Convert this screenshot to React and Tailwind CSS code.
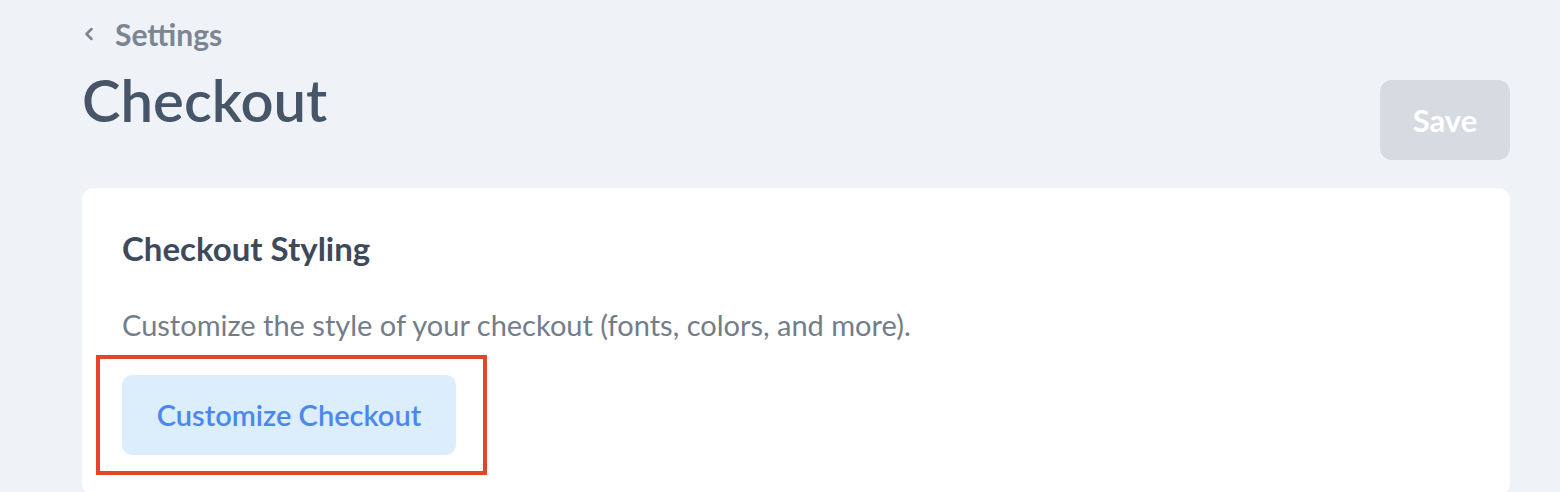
import React from 'react';
import { ChevronLeft } from 'lucide-react';

export default function App() {
    return (
        <div className="min-h-[492px] bg-[#eff3f7] pl-[82px] pr-[50px] pt-[18px] overflow-hidden" style={{ fontFamily: 'Lato, "Open Sans", sans-serif' }}>
            <div className="flex items-start justify-between">
                <div>
                    <a className="flex items-center gap-[16px] text-[#7b8594] text-[30px] font-bold leading-[32px]">
                        <ChevronLeft size={20} strokeWidth={3} className="-ml-[3px]" /> Settings
                    </a>
                    <h1 className="mt-[17px] text-[58px] leading-[66px] font-semibold text-[#475569]">Checkout</h1>
                </div>
                <button className="mt-[62px] w-[130px] h-[80px] rounded-xl bg-[#d6dbe2] text-white text-[31px] font-bold">
                    Save
                </button>
            </div>

            <div className="mt-[28px] bg-white rounded-xl px-[40px] pt-[40px] pb-[40px]">
                <h2 className="text-[33px] leading-[40px] font-bold text-[#3e4a5c]">Checkout Styling</h2>
                <p className="mt-[39px] text-[29px] leading-[36px] text-[#737d8a]">
                    Customize the style of your checkout (fonts, colors, and more).
                </p>
                <div className="relative mt-[32px] inline-block">
                    <button className="w-[334px] h-[80px] rounded-[10px] bg-[#dcedfc] text-[#4a88f0] text-[29px] font-semibold">
                        Customize Checkout
                    </button>
                    <div className="absolute -left-[26px] -top-[20px] w-[391px] h-[120px] border-4 border-[#e5432b] pointer-events-none" />
                </div>
            </div>
        </div>
    );
}
